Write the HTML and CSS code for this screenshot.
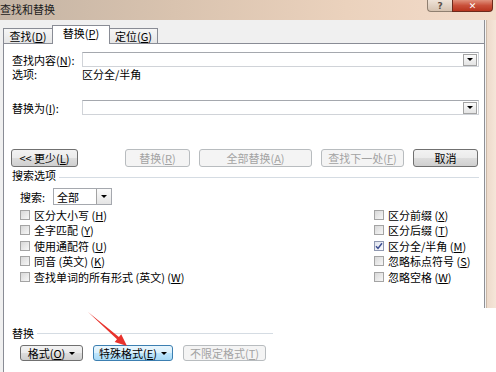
FILE: index.html
```html
<!DOCTYPE html>
<html lang="zh-CN">

<head>
    <title>查找和替换</title>
    <meta charset="UTF-8">
    <link rel="stylesheet" href="styles.css">
</head>

<body>
    <div class="titlebar">
        <span class="title">查找和替换</span>
        <div class="caption">
            <span class="cap-help">?</span>
            <span class="cap-close">✕</span>
        </div>
    </div>

    <div class="window">
        <div class="client">
            <div class="tabs">
                <div class="tab">查找(<u>D</u>)</div>
                <div class="tab active">替换(<u>P</u>)</div>
                <div class="tab">定位(<u>G</u>)</div>
            </div>

            <div class="panel">
                <div class="field first">
                    <label>查找内容(<u>N</u>):</label>
                    <div class="combo"><span class="drop"><i></i></span></div>
                </div>
                <div class="field opt">
                    <label>选项:</label>
                    <span>区分全/半角</span>
                </div>
                <div class="field second">
                    <label>替换为(<u>I</u>):</label>
                    <div class="combo"><span class="drop"><i></i></span></div>
                </div>

                <div class="btnrow">
                    <button class="btn w-less">&lt;&lt; 更少(<u>L</u>)</button>
                    <div class="btngroup">
                        <button class="btn off w-rep">替换(<u>R</u>)</button>
                        <button class="btn off w-all">全部替换(<u>A</u>)</button>
                        <button class="btn off w-next">查找下一处(<u>F</u>)</button>
                        <button class="btn w-cancel">取消</button>
                    </div>
                </div>

                <div class="group">搜索选项</div>

                <div class="search">
                    <label>搜索:</label>
                    <div class="select">
                        <span>全部</span>
                        <span class="drop"><i></i></span>
                    </div>
                </div>

                <div class="checks">
                    <div class="cb"><span class="box"></span><span>区分大小写 (<u>H</u>)</span></div>
                    <div class="cb"><span class="box"></span><span>全字匹配 (<u>Y</u>)</span></div>
                    <div class="cb"><span class="box"></span><span>使用通配符 (<u>U</u>)</span></div>
                    <div class="cb"><span class="box"></span><span>同音 (英文) (<u>K</u>)</span></div>
                    <div class="cb"><span class="box"></span><span>查找单词的所有形式 (英文) (<u>W</u>)</span></div>
                    <div class="cb"><span class="box"></span><span>区分前缀 (<u>X</u>)</span></div>
                    <div class="cb"><span class="box"></span><span>区分后缀 (<u>T</u>)</span></div>
                    <div class="cb"><span class="box checked"><svg width="8" height="8" viewBox="0 0 8 8"><path d="M1 4.2 L3 6.4 L7 1.2" fill="none" stroke="#3d4f93" stroke-width="1.5"/></svg></span><span>区分全/半角 (<u>M</u>)</span></div>
                    <div class="cb"><span class="box"></span><span>忽略标点符号 (<u>S</u>)</span></div>
                    <div class="cb"><span class="box"></span><span>忽略空格 (<u>W</u>)</span></div>
                </div>

                <div class="group replace">替换</div>

                <div class="btnrow bottom">
                    <button class="btn w-fmt">格式(<u>O</u>)<span class="caret"></span></button>
                    <button class="btn hot w-spec">特殊格式(<u>E</u>)<span class="caret"></span></button>
                    <button class="btn off w-nofmt">不限定格式(<u>T</u>)</button>
                </div>
            </div>
        </div>
        <div class="frame-r"></div>
    </div>

    <svg class="arrow" width="496" height="372" viewBox="0 0 496 372">
        <polygon points="88,312 118.9,337 121.2,334.3 127,346 114.7,341.9 117,339.2" fill="#e8322c" />
    </svg>
</body>

</html>
```

FILE: styles.css
```css
* {
    box-sizing: border-box;
}

body {
    position: relative;
    margin: 0;
    width: 496px;
    height: 372px;
    overflow: hidden;
    display: flex;
    flex-direction: column;
    background-color: #ffffff;
    font-family: "Noto Sans CJK SC", "Liberation Sans", sans-serif;
    font-size: 11px;
    line-height: 12px;
    color: #000000;
}

u {
    text-decoration: underline;
}

/* title bar */

.titlebar {
    flex: none;
    height: 20px;
    display: flex;
    align-items: flex-start;
    background: linear-gradient(to right, #c4b4a4 0%, #d9c3af 35%, #ebd2bd 70%, #f3dccb 100%);
}

.title {
    padding-top: 3px;
    color: #1c1c1c;
}

.caption {
    margin-left: auto;
    margin-right: 3px;
    display: flex;
}

.cap-help,
.cap-close {
    height: 12px;
    display: flex;
    align-items: center;
    justify-content: center;
    font-family: "DejaVu Sans", sans-serif;
    font-size: 9px;
    line-height: 10px;
}

.cap-help {
    width: 25px;
    border: 1px solid #8f7f70;
    border-top: none;
    border-right: none;
    border-bottom-left-radius: 4px;
    background: linear-gradient(#efe3d8, #d5c2b0);
    color: #5a5048;
    font-weight: bold;
}

.cap-close {
    width: 41px;
    border: 1px solid #6d2a1c;
    border-top: none;
    border-bottom-right-radius: 4px;
    background: linear-gradient(#e0917c, #c9503a 50%, #b8341e);
    color: #ffffff;
    font-weight: bold;
}

/* window */

.window {
    flex: 1;
    display: flex;
}

.client {
    flex: 1;
    display: flex;
    flex-direction: column;
    padding-left: 3px;
    background-color: #f0f0f0;
}

.frame-r {
    width: 12px;
    height: 288px;
    background: linear-gradient(to right, #8e9096 0, #8e9096 1px, #f4f4f4 1px, #f4f4f4 2px, #c9b8a8 2px, #c9b8a8 3px, #eddacb 3px, #f5e6d9 100%);
}

/* tabs */

.tabs {
    flex: none;
    height: 23px;
    display: flex;
    align-items: flex-end;
}

.tab {
    position: relative;
    width: 50px;
    height: 15px;
    border: 1px solid #898c95;
    border-bottom: none;
    background: linear-gradient(#f6f6f6, #e6e6e6);
    text-align: center;
    line-height: 14px;
}

.tab + .tab {
    margin-left: -1px;
}

.tab.active {
    z-index: 1;
    width: 58px;
    height: 19px;
    margin-bottom: -1px;
    background: #ffffff;
    line-height: 15px;
}

.tab:last-child {
    width: 49px;
}

.panel {
    flex: 1;
    padding: 0 5px 0 8px;
    border-top: 1px solid #898c95;
    border-left: 1px solid #898c95;
    background-color: #ffffff;
}

/* fields */

.field {
    display: flex;
    align-items: center;
    height: 15px;
}

.field label {
    width: 70px;
}

.field.first {
    margin-top: 8px;
}

.field.opt {
    height: 12px;
    margin-top: 1px;
}

.field.second {
    margin-top: 20px;
}

.combo {
    flex: 1;
    height: 15px;
    display: flex;
    justify-content: flex-end;
    align-items: center;
    padding-right: 1px;
    border: 1px solid #d0d3d8;
    border-top-color: #a5a8ae;
}

.drop {
    width: 14px;
    height: 12px;
    display: flex;
    align-items: center;
    justify-content: center;
    border: 1px solid #a3a3a3;
    background: linear-gradient(#fbfbfb, #e4e4e4);
}

.drop i {
    width: 0;
    height: 0;
    border-left: 3px solid transparent;
    border-right: 3px solid transparent;
    border-top: 3px solid #000000;
}

/* buttons */

.btnrow {
    display: flex;
    height: 18px;
    margin-top: 34px;
    margin-left: -1px;
}

.btngroup {
    display: flex;
    gap: 9px;
    margin-left: 47px;
}

.btn {
    height: 100%;
    padding: 0;
    display: flex;
    align-items: center;
    justify-content: center;
    border: 1px solid #707070;
    border-radius: 3px;
    background: linear-gradient(#f2f2f2 0%, #ebebeb 50%, #dddddd 50%, #cfcfcf 100%);
    font-family: inherit;
    font-size: 11px;
    line-height: 12px;
    color: #000000;
}

.btn.off {
    border-color: #b8bcbf;
    background: #f4f4f4;
    color: #a3a3a3;
}

.btn.hot {
    border-color: #3c7fb1;
    background: linear-gradient(#eaf6fd 0%, #d9f0fc 50%, #bee6fd 50%, #a7d9f5 100%);
}

.w-less { width: 67px; }
.w-rep { width: 65px; }
.w-all { width: 113px; }
.w-next { width: 83px; }
.w-cancel { width: 65px; }
.w-fmt { width: 63px; }
.w-spec { width: 80px; }
.w-nofmt { width: 83px; }

.caret {
    width: 0;
    height: 0;
    margin-left: 4px;
    border-left: 3px solid transparent;
    border-right: 3px solid transparent;
    border-top: 3px solid #000000;
}

/* group headers */

.group {
    display: flex;
    height: 12px;
    margin-top: 2px;
}

.group::after {
    content: "";
    flex: 1;
    height: 1px;
    margin: 8px 0 0 3px;
    background-color: #d5dce3;
}

.group.replace {
    width: 261px;
    margin-top: 42.5px;
}

.group.replace::after {
    margin-top: 6px;
}

/* search options */

.search {
    display: flex;
    align-items: center;
    height: 17px;
    margin-top: 7px;
    padding-left: 8px;
}

.search label {
    width: 33px;
}

.select {
    width: 59px;
    height: 17px;
    display: flex;
    align-items: center;
    border: 1px solid #a5a8ae;
}

.select span:first-child {
    flex: 1;
    padding-left: 3px;
}

.select .drop {
    width: 15px;
    height: 15px;
    border-top: none;
    border-bottom: none;
    border-right: none;
}

.checks {
    display: grid;
    grid-template-columns: 354px 1fr;
    grid-template-rows: repeat(5, 15.5px);
    grid-auto-flow: column;
    margin-top: 2px;
    padding-left: 8px;
}

.cb {
    display: flex;
    align-items: center;
    gap: 4px;
    white-space: nowrap;
}

.box {
    width: 10px;
    height: 10px;
    display: flex;
    align-items: center;
    justify-content: center;
    border: 1px solid #a4a4a4;
    background: linear-gradient(135deg, #d8d8d8, #f7f7f7);
}

.box.checked {
    border-color: #8f98b0;
    background: linear-gradient(135deg, #dfe3ee, #fbfbfd);
}

.btnrow.bottom {
    height: 16px;
    gap: 10px;
    margin-top: 6px;
    margin-left: 0;
    padding-left: 8px;
}

.arrow {
    position: absolute;
    top: 0;
    left: 0;
    pointer-events: none;
}
```
